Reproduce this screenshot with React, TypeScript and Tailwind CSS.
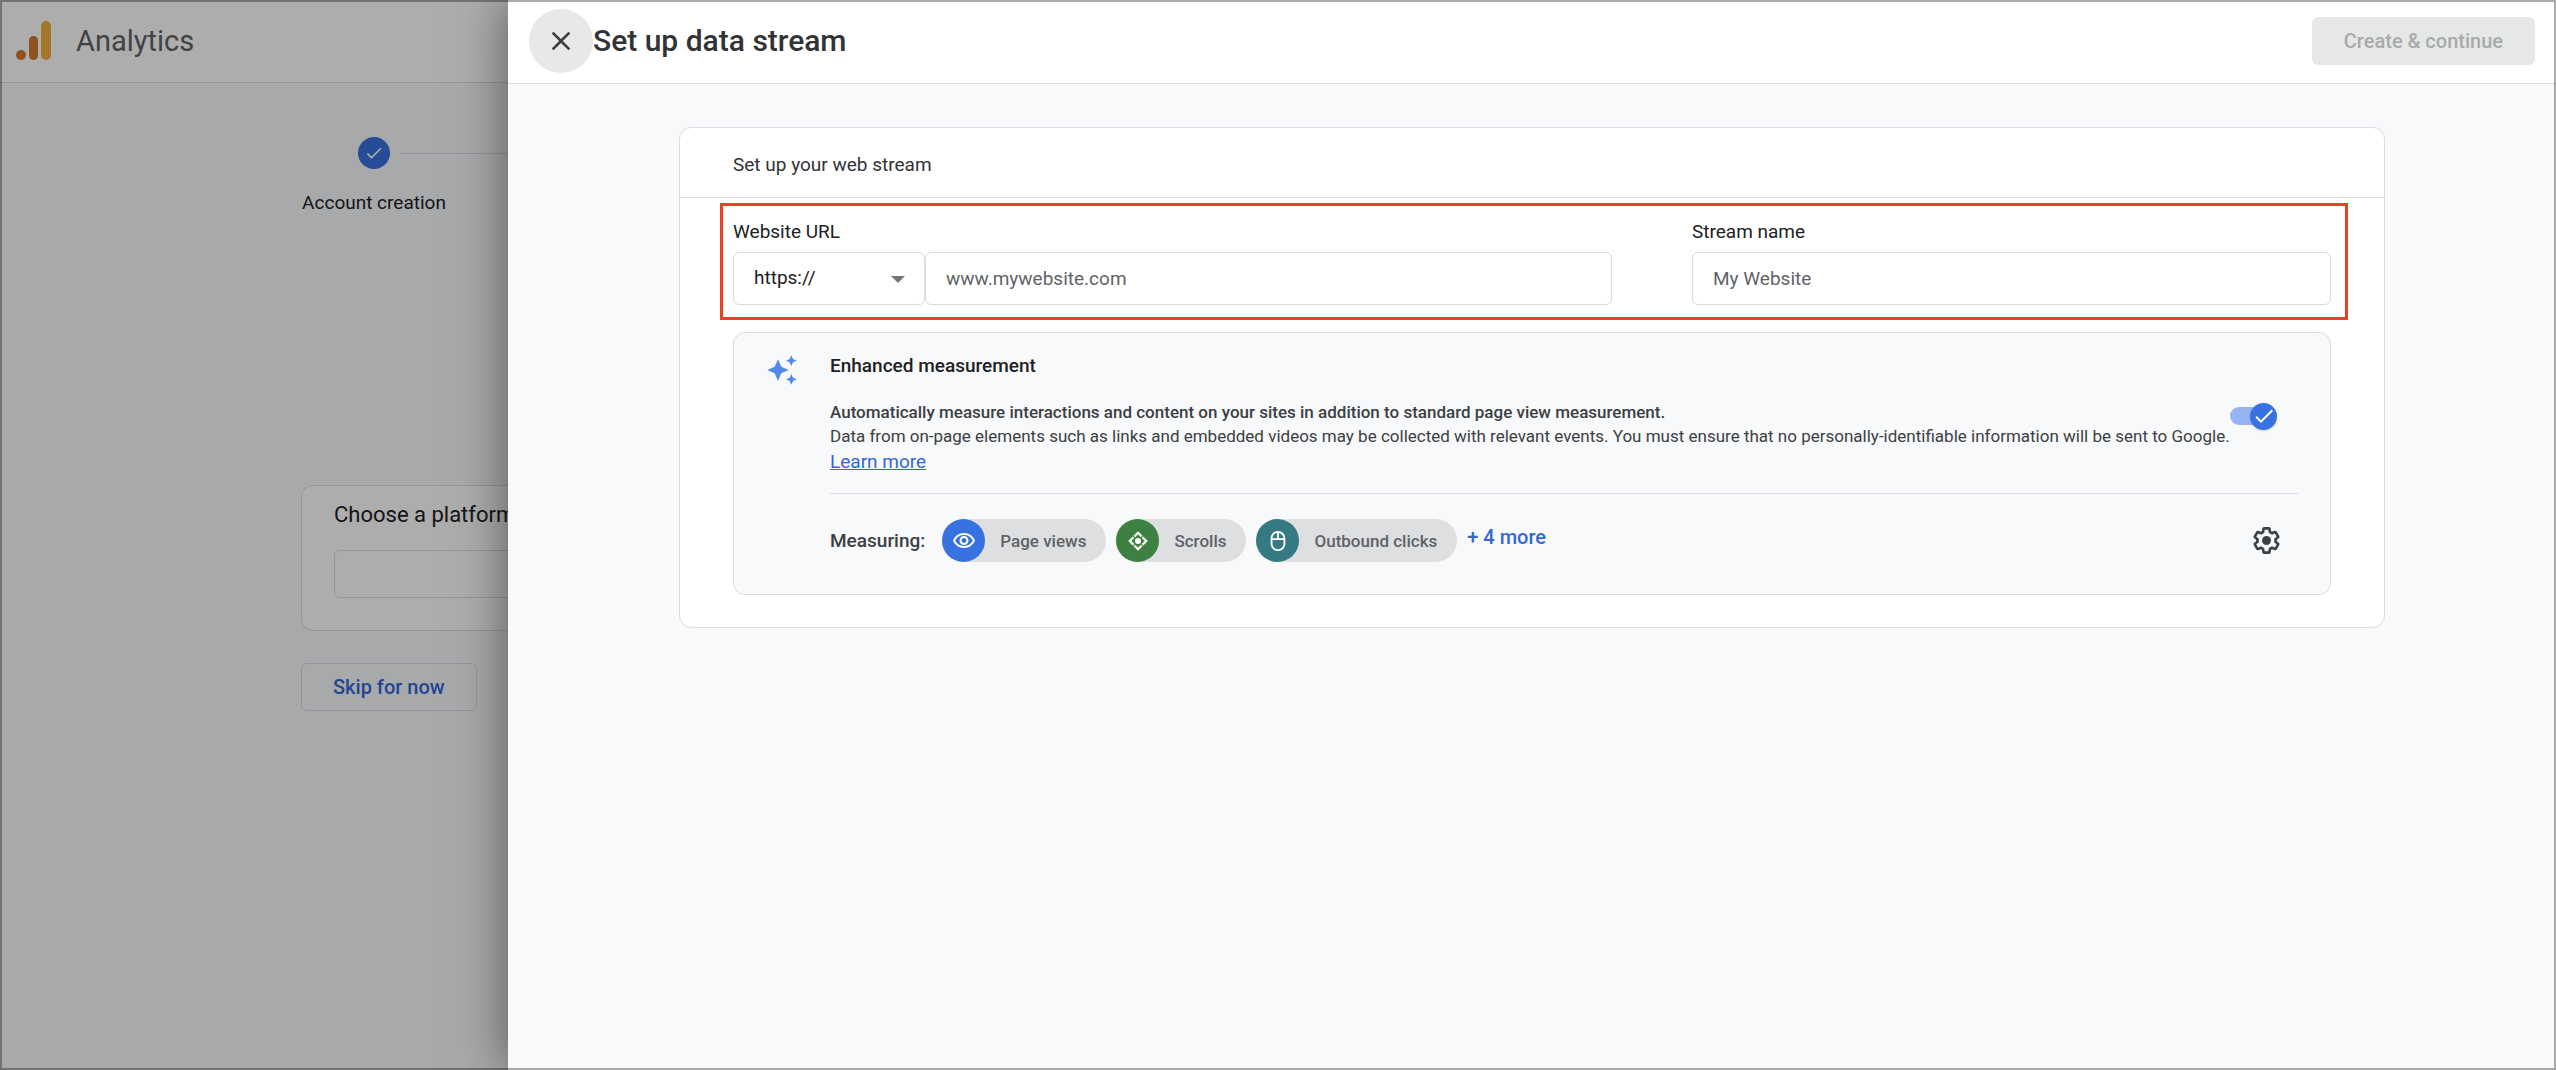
import type { ReactNode } from 'react';
import { MdOutlineVisibility, MdOutlineMouse, MdCheck, MdClose } from 'react-icons/md';

interface Measurement {
  label: string;
  color: string;
  icon: ReactNode;
}

const measurements: Measurement[] = [
  { label: 'Page views', color: 'bg-[#3871e0]', icon: <MdOutlineVisibility size={24} /> },
  { label: 'Scrolls', color: 'bg-[#3d8041]', icon: <ScrollIcon /> },
  { label: 'Outbound clicks', color: 'bg-[#357a82]', icon: <MdOutlineMouse size={22} /> },
];

export default function App() {
  return (
    <div className="relative min-h-screen overflow-hidden bg-[#f8f9fb] font-['Roboto',sans-serif] text-[#202124]">
      <SetupPage />
      <div className="absolute inset-0 bg-black/32" />
      <DataStreamDrawer />
      <div className="pointer-events-none absolute inset-0 border-2 border-black/33" />
    </div>
  );
}

/** Account setup page that stays visible behind the drawer */
function SetupPage() {
  return (
    <div>
      <header className="flex h-[83px] items-center border-b border-[#dadce0] bg-white pl-4">
        <AnalyticsLogo />
        <span className="ml-6 text-[29px] leading-8 text-[#5f6368]">Analytics</span>
      </header>

      <main className="mx-auto max-w-[1954px] pt-[54px]">
        <div className="flex">
          <div className="flex w-[146px] flex-col items-center">
            <span className="flex size-8 items-center justify-center rounded-full bg-[#3871e0] text-white">
              <MdCheck size={20} />
            </span>
            <span className="mt-[22px] text-[19px] leading-6 whitespace-nowrap">Account creation</span>
          </div>
          <div className="-ml-[47px] mt-4 h-px flex-1 bg-[#dadce0]" />
        </div>

        <section className="mt-[270px] rounded-xl border border-[#dadce0] bg-white px-8 pt-[15px] pb-8">
          <label htmlFor="platform" className="text-[22px] leading-7">
            Choose a platform
          </label>
          <input id="platform" className="mt-[21px] block h-12 w-full rounded-md border border-[#dadce0] px-5" />
        </section>

        <button className="mt-8 h-12 rounded-md border border-[#dadce0] px-[31px] text-[20px] font-medium text-[#3367d6]">
          Skip for now
        </button>
      </main>
    </div>
  );
}

function DataStreamDrawer() {
  return (
    <div className="absolute inset-y-0 right-0 left-[508px] bg-[#f8f9fb] shadow-[0_0_48px_rgba(0,0,0,0.5)]">
      <header className="flex h-[84px] items-center justify-between border-b border-[#dadce0] bg-white px-[21px] pb-0.5">
        <div className="flex items-center">
          <button
            aria-label="Close"
            className="flex size-16 items-center justify-center rounded-full bg-[#e8e8e8] text-[#3c4043]"
          >
            <MdClose size={32} />
          </button>
          <h1 className="text-[30px] leading-9 font-medium text-[#323336]">Set up data stream</h1>
        </div>
        <button disabled className="h-12 rounded-md bg-[#e6e8e7] px-8 text-[20px] font-medium text-[#a8aaab]">
          Create &amp; continue
        </button>
      </header>

      <main className="mx-auto mt-[43px] max-w-[1706px] rounded-xl border border-[#dadce0] bg-white">
        <h2 className="flex h-[70px] items-center border-b border-[#dadce0] px-[53px] pt-1 text-[19px] leading-6 text-[#323336]">
          Set up your web stream
        </h2>
        <div className="pt-[5px] pr-9 pb-8 pl-10">
          <StreamFields />
          <EnhancedMeasurement />
        </div>
      </main>
    </div>
  );
}

function StreamFields() {
  return (
    <form className="flex gap-20 border-3 border-[#ea4025] pt-[14px] pr-[14px] pb-3 pl-[10px]">
      <div className="flex-[879]">
        <label htmlFor="website-url" className="block text-[19px] leading-6">
          Website URL
        </label>
        <div className="mt-2 flex">
          <div className="relative w-[192px]">
            <select
              aria-label="Protocol"
              className="h-[53px] w-full appearance-none rounded-md border border-[#dadce0] bg-white px-5 text-[19px]"
            >
              <option>https://</option>
              <option>http://</option>
            </select>
            <span className="pointer-events-none absolute top-6 right-5 border-x-7 border-t-7 border-x-transparent border-t-[#757575]" />
          </div>
          <input
            id="website-url"
            placeholder="www.mywebsite.com"
            className="h-[53px] flex-1 rounded-md border border-[#dadce0] px-5 text-[19px] placeholder:text-[#5f6368]"
          />
        </div>
      </div>
      <div className="flex-[639]">
        <label htmlFor="stream-name" className="block text-[19px] leading-6">
          Stream name
        </label>
        <input
          id="stream-name"
          placeholder="My Website"
          className="mt-2 block h-[53px] w-full rounded-md border border-[#dadce0] px-5 text-[19px] placeholder:text-[#5f6368]"
        />
      </div>
    </form>
  );
}

function EnhancedMeasurement() {
  return (
    <section className="mt-3 mr-[17px] ml-[13px] flex rounded-xl border border-[#dadce0] bg-[#f8f9fb] px-8 pt-[21px] pb-8">
      <SparkleIcon />
      <div className="ml-8 flex-1">
        <h3 className="text-[19px] leading-6 font-medium">Enhanced measurement</h3>
        <div className="mt-[22px] flex justify-between text-[#3c4043]">
          <div>
            <p className="text-[17px] leading-6 font-medium">
              Automatically measure interactions and content on your sites in addition to standard page view measurement.
            </p>
            <p className="text-[17px] leading-6">
              Data from on-page elements such as links and embedded videos may be collected with relevant events. You must
              ensure that no personally-identifiable information will be sent to Google.
            </p>
            <a href="#" className="text-[19px] leading-7 text-[#3367d6] underline">
              Learn more
            </a>
          </div>
          <Toggle />
        </div>

        <div className="mt-[17px] flex items-center border-t border-[#dadce0] pt-[25px]">
          <span className="text-[19px] leading-6 font-medium text-[#3c4043]">Measuring:</span>
          <div className="ml-[17px] flex gap-[10px]">
            {measurements.map((m) => (
              <Chip key={m.label} {...m} />
            ))}
          </div>
          <button className="mb-2 ml-[10px] text-[20px] leading-6 font-medium text-[#3367d6]">+ 4 more</button>
          <button aria-label="Measurement settings" className="mr-[17px] ml-auto text-[#3c4043]">
            <GearIcon />
          </button>
        </div>
      </div>
    </section>
  );
}

function Chip({ label, color, icon }: Measurement) {
  return (
    <span className="flex h-[43px] items-center rounded-full bg-[#dddfe1] pr-5">
      <span className={`flex size-[43px] items-center justify-center rounded-full text-white ${color}`}>{icon}</span>
      <span className="ml-[15px] text-[17px] leading-6 font-medium text-[#5f6368]">{label}</span>
    </span>
  );
}

function Toggle() {
  return (
    <label className="relative mt-0.5 mr-[21px] flex h-7 w-[47px] shrink-0 items-center justify-end">
      <input type="checkbox" defaultChecked aria-label="Enhanced measurement" className="peer sr-only" />
      <span className="h-[18px] w-full rounded-full bg-[#96b4f3]" />
      <span className="absolute right-0 flex size-[27px] items-center justify-center rounded-full bg-[#3871e0] text-white shadow">
        <MdCheck size={24} />
      </span>
    </label>
  );
}

function AnalyticsLogo() {
  return (
    <svg width="36" height="40" viewBox="0 0 36 40" aria-hidden="true">
      <circle cx="5" cy="34" r="5" fill="#d37a2f" />
      <rect x="13" y="15" width="9" height="24" rx="4.5" fill="#d37a2f" />
      <rect x="25" y="0" width="10" height="39" rx="5" fill="#f0b03c" />
    </svg>
  );
}

function SparkleIcon() {
  return (
    <svg width="32" height="32" viewBox="0 0 24 24" fill="#5488ec" aria-hidden="true">
      <path d="m19 9 1.25-2.75L23 5l-2.75-1.25L19 1l-1.25 2.75L15 5l2.75 1.25L19 9zm-7.5.5L9 4 6.5 9.5 1 12l5.5 2.5L9 20l2.5-5.5L17 12l-5.5-2.5zM19 15l-1.25 2.75L15 19l2.75 1.25L19 23l1.25-2.75L23 19l-2.75-1.25L19 15z" />
    </svg>
  );
}

function ScrollIcon() {
  return (
    <svg width="24" height="24" viewBox="0 0 24 24" fill="none" stroke="currentColor" strokeWidth="2.2" aria-hidden="true">
      <path d="M8.3 7.5 12 3.8l3.7 3.7M8.3 16.5l3.7 3.7 3.7-3.7M7.5 8.3 3.8 12l3.7 3.7M16.5 8.3l3.7 3.7-3.7 3.7" />
      <circle cx="12" cy="12" r="3" fill="currentColor" stroke="none" />
    </svg>
  );
}

function GearIcon() {
  return (
    <svg width="29" height="29" viewBox="0 0 24 24" fill="none" stroke="currentColor" strokeWidth="2.2" aria-hidden="true">
      <path d="M19.43 12.98c.04-.32.07-.64.07-.98 0-.34-.03-.66-.07-.98l2.11-1.65c.19-.15.24-.42.12-.64l-2-3.46c-.09-.16-.26-.25-.44-.25-.06 0-.12.01-.17.03l-2.49 1c-.52-.4-1.08-.73-1.69-.98l-.38-2.65C14.46 2.18 14.25 2 14 2h-4c-.25 0-.46.18-.49.42l-.38 2.65c-.61.25-1.17.59-1.69.98l-2.49-1c-.06-.02-.12-.03-.18-.03-.17 0-.34.09-.43.25l-2 3.46c-.13.22-.07.49.12.64l2.11 1.65c-.04.32-.07.65-.07.98 0 .33.03.66.07.98l-2.11 1.65c-.19.15-.24.42-.12.64l2 3.46c.09.16.26.25.44.25.06 0 .12-.01.17-.03l2.49-1c.52.4 1.08.73 1.69.98l.38 2.65c.03.24.24.42.49.42h4c.25 0 .46-.18.49-.42l.38-2.65c.61-.25 1.17-.59 1.69-.98l2.49 1c.06.02.12.03.18.03.17 0 .34-.09.43-.25l2-3.46c.12-.22.07-.49-.12-.64l-2.11-1.65z" />
      <circle cx="12" cy="12" r="3.7" fill="currentColor" stroke="none" />
    </svg>
  );
}
